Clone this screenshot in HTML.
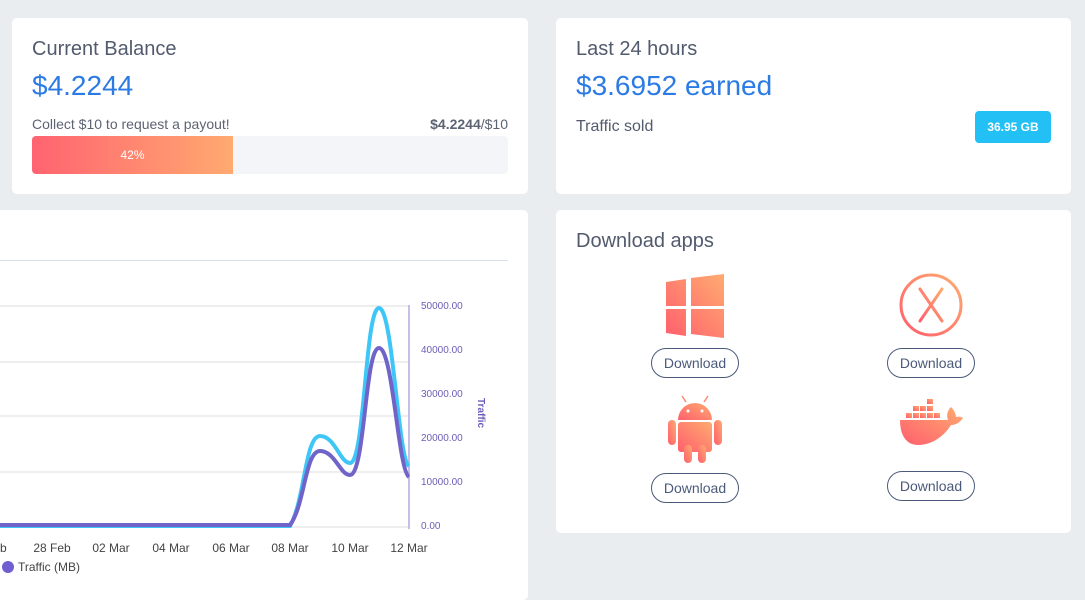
<!DOCTYPE html>
<html><head><meta charset="utf-8"><style>
*{margin:0;padding:0;box-sizing:border-box}
body{width:1085px;height:585px;background:#e9edf0;font-family:"Liberation Sans",sans-serif;position:relative;overflow:hidden;color:#4a5568}
.card{position:absolute;background:#fff;border-radius:5px}
.t{position:absolute;font-size:20px;color:#525a6e}
.big{position:absolute;font-size:28px;color:#2c7be5}
.btn{position:absolute;width:88px;height:30px;border:1px solid #4b5a7a;border-radius:15px;font-size:14px;color:#4b5a7a;text-align:center;line-height:28px}
</style></head><body>
<div class="card" style="left:12px;top:18px;width:516px;height:176px">
 <div class="t" style="left:20px;top:20px">Current Balance</div>
 <div class="big" style="left:20px;top:52px">$4.2244</div>
 <div style="position:absolute;left:20px;top:98px;font-size:14px;color:#5c6373">Collect $10 to request a payout!</div>
 <div style="position:absolute;right:20px;top:98px;font-size:14px;color:#5c6373"><b>$4.2244</b>/$10</div>
 <div style="position:absolute;left:20px;top:118px;width:476px;height:38px;background:#f3f5f8;border-radius:4px;overflow:hidden">
  <div style="width:201px;height:38px;background:linear-gradient(90deg,#ff6370,#ffaa70);color:#fff;font-size:12px;text-align:center;line-height:38px">42%</div>
 </div>
</div>
<div class="card" style="left:556px;top:18px;width:515px;height:176px">
 <div class="t" style="left:20px;top:20px">Last 24 hours</div>
 <div class="big" style="left:20px;top:52px">$3.6952 earned</div>
 <div style="position:absolute;left:20px;top:100px;font-size:16px;color:#525a6e">Traffic sold</div>
 <div style="position:absolute;left:419px;top:93px;width:76px;height:32px;background:#22c0f5;border-radius:4px;color:#fff;font-size:12px;font-weight:bold;text-align:center;line-height:32px">36.95 GB</div>
</div>
<div class="card" style="left:-10px;top:210px;width:538px;height:390px">
 <div style="position:absolute;left:10px;top:50px;width:508px;height:1px;background:#d8dee8"></div>
</div>
<svg style="position:absolute;left:0;top:0" width="530" height="585">
 <g stroke="#e8e8e8" stroke-width="1.5">
  <line x1="0" y1="306" x2="409" y2="306"/><line x1="0" y1="362" x2="409" y2="362"/>
  <line x1="0" y1="416" x2="409" y2="416"/><line x1="0" y1="472" x2="409" y2="472"/>
  <line x1="0" y1="527" x2="409" y2="527"/>
 </g>
 <line x1="409" y1="305" x2="409" y2="529" stroke="#b3aadd" stroke-width="1.5"/>
 <g fill="#6b5eb8" font-size="10" font-family="Liberation Sans">
  <text x="421" y="309">50000.00</text><text x="421" y="353">40000.00</text>
  <text x="421" y="397">30000.00</text><text x="421" y="441">20000.00</text>
  <text x="421" y="485">10000.00</text><text x="421" y="529">0.00</text>
  <text transform="translate(478,398) rotate(90)" font-weight="bold" font-size="10">Traffic</text>
 </g>
 <g fill="#444" font-size="12" font-family="Liberation Sans" text-anchor="middle">
  <text x="0" y="552">eb</text><text x="52" y="552">28 Feb</text><text x="111" y="552">02 Mar</text>
  <text x="171" y="552">04 Mar</text><text x="231" y="552">06 Mar</text><text x="290" y="552">08 Mar</text>
  <text x="350" y="552">10 Mar</text><text x="409" y="552">12 Mar</text>
 </g>
 <circle cx="8" cy="567" r="6" fill="#6f5fcf"/>
 <text x="18" y="571" font-size="12" fill="#444" font-family="Liberation Sans">Traffic (MB)</text>
 <path d="M0 526 L290 526 C305 500,305 436,320 436 C335 436,340 463,350 463 C365 463,365 308,379 308 C393 308,398 460,409 466" fill="none" stroke="#3ec6f7" stroke-width="4"/>
 <path d="M0 525 L290 525 C305 505,305 451,320 451 C335 451,340 475,350 475 C365 475,365 348,379 348 C393 348,398 470,409 477" fill="none" stroke="#7064c9" stroke-width="4"/>
</svg>
<div class="card" style="left:556px;top:210px;width:515px;height:323px">
 <div class="t" style="left:20px;top:20px">Download apps</div>
</div>
<svg style="position:absolute;left:640px;top:260px" width="360" height="220">
 <defs><linearGradient id="g" x1="0" y1="1" x2="1" y2="0"><stop offset="0" stop-color="#ff5f6d"/><stop offset="1" stop-color="#ffab70"/></linearGradient></defs>
 <path d="M26 22 L46 19 L46 46 L26 46Z M51 18 L84 14 L84 46 L51 46Z M26 49 L46 49 L46 76 L26 73Z M51 49 L84 49 L84 78 L51 74Z" fill="url(#g)"/>
 <circle cx="291" cy="45" r="30" fill="none" stroke="url(#g)" stroke-width="3"/>
 <path d="M280 29 L302 61 M302 29 L280 61" stroke="url(#g)" stroke-width="3" stroke-linecap="round"/>
 <g fill="url(#g)">
  <path d="M38 160 A17 17 0 0 1 72 160 Z"/>
  <rect x="38" y="162" width="34" height="30" rx="3"/>
  <rect x="28" y="160" width="8" height="25" rx="4"/><rect x="74" y="160" width="8" height="25" rx="4"/>
  <rect x="44" y="185" width="8" height="18" rx="4"/><rect x="58" y="185" width="8" height="18" rx="4"/>
 </g>
 <path d="M46 142 L42 136 M64 142 L68 136" stroke="#ff8a70" stroke-width="1.5"/>
 <circle cx="48" cy="151" r="1.5" fill="#fff"/><circle cx="62" cy="151" r="1.5" fill="#fff"/>
 <g fill="url(#g)">
  <rect x="266" y="153" width="6" height="5"/><rect x="273" y="153" width="6" height="5"/><rect x="280" y="153" width="6" height="5"/><rect x="287" y="153" width="6" height="5"/><rect x="294" y="153" width="6" height="5"/>
  <rect x="273" y="146" width="6" height="5"/><rect x="280" y="146" width="6" height="5"/><rect x="287" y="146" width="6" height="5"/>
  <rect x="287" y="139" width="6" height="5"/>
  <path d="M260 160 L308 160 C306 154,308 150,311 147 C315 151,316 155,316 157 C319 156,322 157,323 158 C319 164,314 165,311 165 C303 178,290 185,278 185 C266 185,260 175,260 160Z"/>
 </g>
</svg>
<div class="btn" style="left:651px;top:348px">Download</div>
<div class="btn" style="left:887px;top:348px">Download</div>
<div class="btn" style="left:651px;top:473px">Download</div>
<div class="btn" style="left:887px;top:471px">Download</div>
</body></html>
